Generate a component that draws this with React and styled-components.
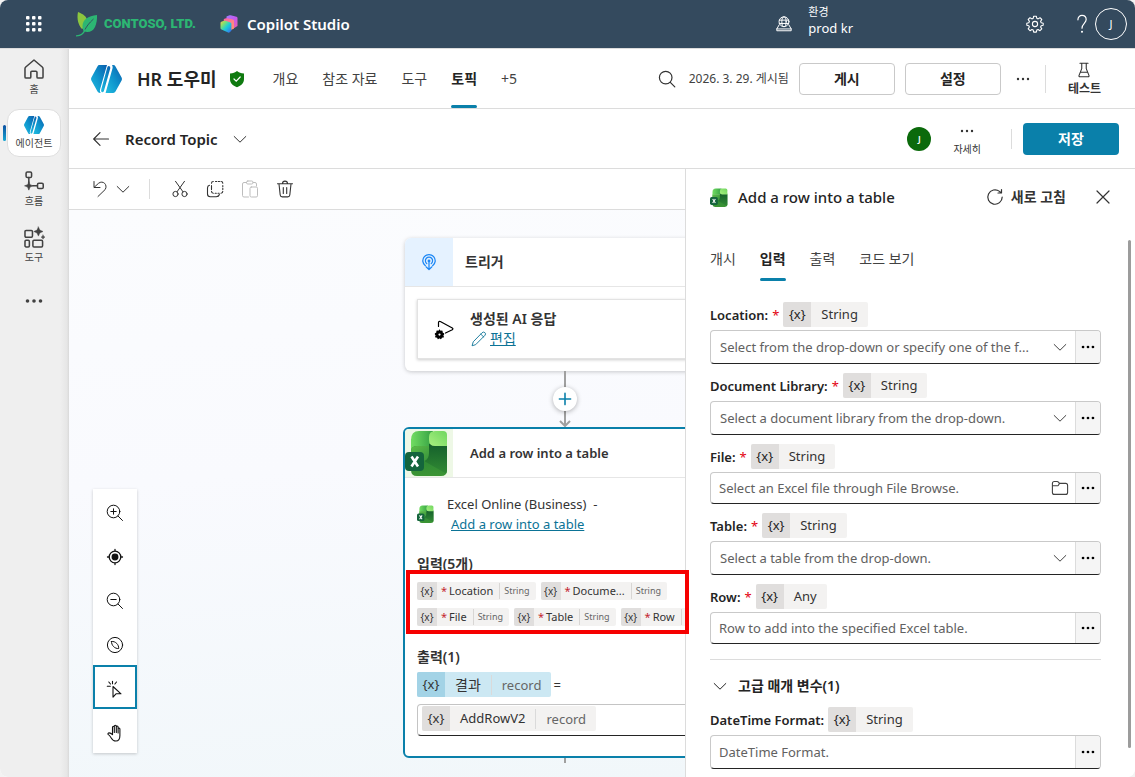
import React from 'react';
import styled, { createGlobalStyle, css } from 'styled-components';

const blue = '#0a80aa';
const ink = '#242424';
const line = '#dcdcdc';

const Global = createGlobalStyle`
  * { box-sizing: border-box; }
  body { margin: 0; background: #f3f3f3; color: ${ink}; }
  body, button, input, select {
    font-family: "Noto Sans", "Noto Sans CJK KR", sans-serif;
    font-size: 13px;
    line-height: 20px;
  }
  button { border: 0; padding: 0; background: none; color: inherit; cursor: pointer; }
  a { color: #0b7396; }
  svg { display: block; flex: none; }
  h1, h2, h3 { margin: 0; font-weight: 600; }
`;

/* ---------- icons ---------- */

function Icon({ size = 20, width = 1, children, ...rest }) {
  return (
    <svg width={size} height={size} viewBox="0 0 20 20" fill="none" stroke="currentColor"
      strokeWidth={width} strokeLinecap="round" strokeLinejoin="round" aria-hidden="true" {...rest}>
      {children}
    </svg>
  );
}

const Chevron = ({ size = 20 }) => <Icon size={size}><path d="M4.2 7.5 10 13.2l5.800-5.700" /></Icon>;
const Dots = ({ size = 20, r = 1.2, gap = 5 }) => (
  <Icon size={size} fill="currentColor" stroke="none">
    <circle cx={10 - gap} cy="10" r={r} /><circle cx="10" cy="10" r={r} /><circle cx={10 + gap} cy="10" r={r} />
  </Icon>
);
const Waffle = () => (
  <svg width="18" height="18" viewBox="0 0 18 18" fill="#fff" aria-hidden="true">
    {[1, 7, 13].map((y) => [1, 7, 13].map((x) => <rect key={`${x}-${y}`} x={x} y={y} width="3.500" height="3.500" rx="1" />))}
  </svg>
);
const Leaf = () => (
  <svg width="22" height="25" viewBox="0 0 22 25" aria-hidden="true">
    <path d="M2 0c5 2 9.500 4.500 9 9.500C10.700 13 8.500 15.500 6 17 2.500 13 .5 7 2 0z" fill="#8cc63f" />
    <path d="M21 3C12 4 6.500 7.500 6.500 14c0 2 .4 3.800 1.200 5.200C12 21 17 19.500 19 15c1.500-3.500 2.300-8 2-12z" fill="#2cb673" />
    <path d="M17.500 7C13 11 10 15 8.300 19" stroke="#344a5e" strokeWidth=".9" fill="none" />
    <path d="M.5 23.800c4 0 7-2 8.500-6" stroke="#2cb673" strokeWidth="1.300" fill="none" strokeLinecap="round" />
  </svg>
);
const CopilotLogo = () => (
  <svg width="18" height="18" viewBox="0 0 18 18" aria-hidden="true">
    <defs>
      <linearGradient id="cpBack" x1="0" y1="0" x2="1" y2="1"><stop offset="0" stopColor="#a27bff" /><stop offset=".5" stopColor="#c459f0" /><stop offset="1" stopColor="#f0609e" /></linearGradient>
      <linearGradient id="cpMid" x1="0" y1="0" x2="1" y2="1"><stop offset="0" stopColor="#ff5fa8" /><stop offset="1" stopColor="#ff9b6b" /></linearGradient>
      <linearGradient id="cpFront" x1="0" y1="0" x2="1" y2="1"><stop offset="0" stopColor="#ffc34d" /><stop offset=".25" stopColor="#8be06a" /><stop offset=".55" stopColor="#1ccfd6" /><stop offset="1" stopColor="#3b63f0" /></linearGradient>
    </defs>
    <path d="M6.500 1.600 9.500.3h1.200L16.500 1.700q1 .3 1 1.300v8l-4 2.500L6.500 10z" fill="url(#cpBack)" />
    <path d="M3.800 4 6 3.200h1l6 1.300q1 .3 1 1.300v7.700l-3 1.500-7.200-4z" fill="url(#cpMid)" />
    <path d="M1.300 6.800 4 5.800q.8-.3 1.600 0l4.800 1.600q1 .4 1 1.400v7l-2 1.700q-.6.300-1.300 0L1.500 14.500Q.5 14 .5 13V8q0-.9.8-1.200z" fill="url(#cpFront)" />
  </svg>
);
const EnvIcon = () => (
  <Icon size={18} width={1.1}>
    <circle cx="10" cy="7.500" r="5.500" /><ellipse cx="10" cy="7.500" rx="2.400" ry="5.500" />
    <path d="M4.800 5.700h10.400M4.800 9.400h10.400M4.600 11 2 15.500h16L15.400 11M2 15.500v2h16v-2" />
  </Icon>
);
const Gear = () => (
  <Icon width={1.1}>
    <circle cx="10" cy="10" r="2.600" />
    <path d="M8.700 2.200h2.600l.5 2.100 1.300.6 1.900-1.200 1.800 1.800-1.200 1.900.6 1.300 2 .5v2l-2 .5-.6 1.300 1.200 1.900-1.800 1.800-1.900-1.200-1.300.6-.5 2H8.700l-.5-2-1.300-.6L5 16.700l-1.800-1.800L4.400 13l-.6-1.300-2-.5v-2l2-.5.6-1.300-1.200-1.900L5 3.700l1.900 1.200 1.300-.6z" />
  </Icon>
);
const Help = () => <Icon size={22} width={1.1}><path d="M6.300 6.200C6.300 3.800 7.900 2.200 10 2.200s3.800 1.500 3.800 3.800c0 3.200-3.800 3.800-3.800 7.800" /><circle cx="10" cy="17" r=".4" fill="currentColor" /></Icon>;

const AgentLogo = ({ size, id }) => (
  <svg width={size} height={Math.round(size * 0.9)} viewBox="0 0 30 27" aria-hidden="true">
    <defs><linearGradient id={id} x1="0" y1="1" x2="1" y2="0"><stop offset="0" stopColor="#22bde0" /><stop offset=".5" stopColor="#0e93cc" /><stop offset="1" stopColor="#0b5fae" /></linearGradient></defs>
    <path d="M8 0h7.500L8.800 23.500q-.6 2 .6 3.500H8.600Q7 27 6.300 25.700L.4 15q-.7-1.500 0-3L6.200 1.300Q6.900 0 8 0z" fill={`url(#${id})`} />
    <path d="M17.300.8q1.800.4 1.300 2.500L12.500 25q-.8 1.800-2.200 1.200-.9-.8-.4-2.500L15.800 2.200Q16.300.8 17.300.8z" fill={`url(#${id})`} />
    <path d="M20.300 0h1.200q1.500 0 2.200 1.300L29.600 12q.7 1.500 0 3l-5.900 10.700Q23 27 21.500 27h-7.400L20.700 3.500q.6-2-.4-3.500z" fill={`url(#${id})`} />
  </svg>
);
const Shield = () => (
  <svg width="16" height="18" viewBox="0 0 16 18" aria-hidden="true">
    <path d="M8 1c1.800 1.500 4 2.200 7 2.400V9c0 4-2.600 6.500-7 8.200C3.600 15.500 1 13 1 9V3.400C4 3.200 6.200 2.500 8 1z" fill="#0f7a10" />
    <path d="m5 9 2.200 2.100L11.200 7" stroke="#fff" strokeWidth="1.200" fill="none" strokeLinecap="round" />
  </svg>
);
const Search = () => <Icon width={1.2}><circle cx="8.700" cy="8.600" r="6.300" /><path d="m13.300 13.300 4.500 4.500" /></Icon>;
const Flask = () => <Icon size={18} width={1.2}><path d="M5.500 2.500h9M7.500 2.500v6L4.500 16q-.5 1.500 1 1.500h9q1.500 0 1-1.500l-3-7.500v-6M6 12.500h8" /></Icon>;
const Back = () => <Icon width={1.2}><path d="M17.500 10H3M9 3.700 2.700 10 9 16.300" /></Icon>;
const Home = () => <Icon size={22} width={1.4}><path d="M10 1.800 2.500 8.200q-.7.700-.7 1.600v7.400q0 1 1 1h3.400q.9 0 .9-1V13q0-1 1-1h3.600q1 0 1 1v4.200q0 1 1 1h3.500q1 0 1-1V9.800q0-.9-.7-1.600z" /></Icon>;
const Flow = () => (
  <Icon size={22} width={1.4}>
    <rect x="2.800" y="1.800" width="5" height="5" rx="1.200" /><rect x="13.200" y="12" width="5.200" height="4.800" rx="1.200" />
    <path d="M5.300 6.800v5M9 14.400h4" />
    <path d="M5.300 10.500 6.400 13.300l2.800 1.100-2.800 1.100-1.100 2.800-1.100-2.800-2.800-1.100 2.800-1.100z" fill="currentColor" strokeWidth=".5" />
  </Icon>
);
const Tools = () => (
  <Icon size={22} width={1.4}>
    <rect x="1.800" y="4" width="6.800" height="6.200" rx="1" /><rect x="1.800" y="13" width="4" height="6" rx="1" /><rect x="9" y="13" width="8.800" height="6" rx="1" />
    <path d="m14 .8 1.300 2.900 2.900 1.300-2.900 1.300L14 9.200l-1.300-2.900L9.800 5l2.900-1.300zM18.200 8.200l.6 1.400 1.200.5-1.200.6-.6 1.300-.6-1.300-1.200-.6 1.200-.5z" fill="currentColor" strokeWidth=".4" />
  </Icon>
);
const Undo = () => <Icon><path d="M4 2.500v6h6M4.200 8.300 8.500 4.300c4.500-3.500 9.500 1.500 6.700 6.200L8 17.500" /></Icon>;
const Cut = () => <Icon><circle cx="5.500" cy="15" r="2.600" /><circle cx="14.500" cy="15" r="2.600" /><path d="M5.500 2.300 13 12.800M14.500 2.300 7 12.800" /></Icon>;
const Copy = () => (
  <Icon width={1.1}>
    <path d="M4.500 6.300Q2.500 6.800 2.500 9v6q0 2.700 2.700 2.700h6q2.600 0 3.200-2.200" />
    <path d="M8.300 2.500Q6.500 2.500 6.500 4.300M10.500 2.500h1.200M13.300 2.500h1.200M16 2.500q1.800 0 1.800 1.800M17.800 6.500v1.200M17.800 9.300v1.200M17.800 12.300q0 1.900-1.800 1.900M14.200 14.200h-1.200M11.300 14.200h-1.200M8.300 14.200q-1.800 0-1.800-1.900M6.500 10.500V6.500" />
  </Icon>
);
const Paste = () => <Icon><path d="M6.500 3.500H4q-1.500 0-1.500 1.500v11.500Q2.500 18 4 18h4.500M13 3.500h2Q16.500 3.500 16.500 5v2" /><rect x="6.500" y="2" width="6.500" height="3" rx="1.300" /><rect x="10" y="8" width="7.500" height="10" rx="1.300" /></Icon>;
const Trash = () => <Icon width={1.1}><path d="M2.500 4.800h15M7.500 4.500q0-2.400 2.500-2.400t2.500 2.400M4 5l1.200 11q.2 1.900 2 1.900h5.600q1.800 0 2-1.900L16 5M8.300 8.500v6M11.700 8.500v6" /></Icon>;

const ZoomIn = () => <Icon><circle cx="8.500" cy="8.500" r="6.300" /><path d="m13.100 13.100 4.400 4.400M8.500 5.800v5.400M5.800 8.500h5.400" /></Icon>;
const ZoomOut = () => <Icon><circle cx="8.500" cy="8.500" r="6.300" /><path d="m13.100 13.100 4.400 4.400M5.800 8.500h5.400" /></Icon>;
const Target = () => <Icon width={1.3}><circle cx="10" cy="10" r="5.800" /><circle cx="10" cy="10" r="2.800" fill="currentColor" /><path d="M10 2.500v1M10 16.500v1M2.500 10h1M16.500 10h1" /></Icon>;
const Compass = () => <Icon><circle cx="10" cy="10" r="7.600" /><path d="M6.500 6.500c1.800-.4 4 .6 5.300 2 1.300 1.300 2 3.200 1.900 5-1.800.3-3.900-.6-5.200-2C7.200 10.200 6.400 8.300 6.500 6.500z" /></Icon>;
const Pointer = () => <Icon width={1.1}><path d="M8 7.500v10.600l3-3.300h5zM7.500 2.200v2.500M3.800 3l1.700 2M2.300 7.300h3M11.500 3 9.900 5" /></Icon>;
const Hand = () => <Icon width={1.1}><path d="M7.500 10V4.200q0-1 .9-1t.9 1V9.500 3.200q0-1 1-1t1 1V9.500 4q0-1 .9-1t.9 1v6V6q0-1 .9-1t.9 1v6.500c0 3.500-1.500 5.500-4 5.500-2.400 0-3.500-1-4.500-2.800-1-1.600-2-3-3.300-3.800-.5-.6 0-1.500 1-1.500 1.500 0 2.500.8 3.400 1.800z" /></Icon>;
const TriggerIcon = () => (
  <Icon size={18} width={1.4}>
    <path d="M6 14.200a6.900 6.900 0 1 1 8 0" /><path d="M7.500 11.700a4 4 0 1 1 5 0" /><path d="M10 9v9M7 15.500l3 3 3-3" /><circle cx="10" cy="8.800" r=".9" fill="currentColor" />
  </Icon>
);
const PlayGear = () => (
  <svg width="22" height="22" viewBox="0 0 22 22" fill="none" stroke="#000" strokeWidth="1.200" strokeLinecap="round" strokeLinejoin="round" aria-hidden="true">
    <path d="M5.500 8.500V4.500q.2-1.700 1.800-1l12 6.500q1.200.8 0 1.700L12.500 15" />
    <path d="m6.500 12 .7 1.700 1.800-.5.200 1.900 1.500.8-1 1.400.6 1.600-1.800.2-.6 1.500-1.400-1-1.400 1-.6-1.500-1.800-.2.600-1.600-1-1.400 1.500-.8.200-1.900 1.800.5z" fill="#000" /><circle cx="6.500" cy="16.600" r="1.100" fill="#fff" stroke="none" />
  </svg>
);
const Pencil = () => <Icon size={18}><path d="M13.700 2.800q1.300-1.200 2.800.1t.3 2.800L6.300 16.300 2.300 17.500l1.200-4zM12 4.600l3.300 3.300" /></Icon>;
const Refresh = () => <Icon width={1.2}><path d="M17.200 10A7.200 7.200 0 1 1 14.500 4.400l1.500 1.300M16.500 2.500v3.500h-3.500" /></Icon>;
const Close = () => <Icon width={1.2}><path d="m4 4 12 12M16 4 4 16" /></Icon>;
const Folder = () => <Icon width={1.1}><path d="M2.400 5.500q0-2 2-2h2.800q.7 0 1.200.6l1.100 1.300h6.100q2 0 2 2v7q0 2-2 2H4.400q-2 0-2-2zM2.400 7.800h4.800q.7 0 1.200-.5l1.100-1.900" /></Icon>;

const Excel = ({ size, id }) => (
  <svg width={size} height={size} viewBox="0 0 46 46" aria-hidden="true">
    <defs>
      <linearGradient id={`${id}a`} x1="0" y1="0" x2="0" y2="1"><stop offset="0" stopColor="#3f9f3d" /><stop offset=".5" stopColor="#2f8a35" /><stop offset="1" stopColor="#3c9534" /></linearGradient>
      <linearGradient id={`${id}b`} x1="0" y1="0" x2="1" y2="0"><stop offset="0" stopColor="#72dd62" /><stop offset="1" stopColor="#35a044" /></linearGradient>
      <linearGradient id={`${id}c`} x1="0" y1="0" x2="1" y2="1"><stop offset="0" stopColor="#5fbf4a" /><stop offset="1" stopColor="#36923a" /></linearGradient>
      <linearGradient id={`${id}d`} x1="0" y1="1" x2="1" y2="0"><stop offset="0" stopColor="#a9f080" /><stop offset="1" stopColor="#6fd65f" /></linearGradient>
      <linearGradient id={`${id}e`} x1="0" y1="0" x2="0" y2="1"><stop offset="0" stopColor="#15602c" /><stop offset="1" stopColor="#318a33" /></linearGradient>
    </defs>
    <path d="M6 16h36v24q0 6-6 6H12q-6 0-6-6z" fill={`url(#${id}a)`} />
    <path d="M6 18v-8Q6 1 14 1h14v15H12q-6 0-6 5z" fill={`url(#${id}b)`} />
    <path d="M6 22q0-6 6-6h12v9q0 7-7 7H6z" fill={`url(#${id}c)`} />
    <path d="M24 14h18v26q0 2-1 3.500L19 31q5-1.500 5-8z" fill={`url(#${id}e)`} />
    <path d="M30 1h8q4 0 4 4v11H30q-6 0-6-6V7q0-6 6-6z" fill={`url(#${id}d)`} />
    <rect x="0" y="22" width="19" height="19" rx="4" fill="#14653c" />
    <path d="m6.500 26.500 6.500 10M13 26.500l-6.500 10" stroke="#fff" strokeWidth="2.600" />
  </svg>
);

/* ---------- shell ---------- */

const Shell = styled.div`
  display: flex; flex-direction: column; height: 100vh; min-height: 600px;
  border-radius: 8px; overflow: hidden; background: #fff;
`;
const TopBar = styled.header`
  display: flex; align-items: center; flex: none; height: 49px; padding: 0 8px 0 25px;
  color: #fff; background: #344a5e; border-bottom: 1px solid ${line};
`;
const Brand = styled.span`
  width: 90px; margin-left: 6px; white-space: nowrap;
  font: 900 13px/20px Roboto, sans-serif;
  color: #2cb673;
`;
const LogoSlot = styled.span`margin-left: ${(p) => p.$gap}px;`;
const Product = styled.span`margin-left: 9px; font-size: 15px; font-weight: 600;`;
const Env = styled.div`display: flex; align-items: center; gap: 15px; margin-left: auto;`;
const EnvText = styled.div`
  display: flex; flex-direction: column; font-size: 13px; line-height: 16px; margin-bottom: 8px;
  small { font-size: 11px; }
`;
const TopActions = styled.div`display: flex; align-items: center; margin-left: 172px;`;
const TopButton = styled.button`display: flex; margin-right: ${(p) => p.$after}px;`;
const Me = styled.button`
  width: 32px; height: 32px; border: 1px solid #fff; border-radius: 50%; font-size: 11px;
`;

const Columns = styled.div`display: flex; flex: 1; min-height: 0;`;
const SideNav = styled.nav`
  display: flex; flex-direction: column; flex: none; width: 69px;
  background: linear-gradient(90deg, #efefef 60px, #e6e6e6 67px, #d8d8d8 69px);
`;
const NavItem = styled.button`
  position: relative; display: flex; flex-direction: column; align-items: center; justify-content: center;
  width: 54px; height: 48px; margin: 4px 7px; border-radius: 12px;
  font-size: 10px; line-height: 14px; color: #424242;
  gap: 2px;
  ${(p) => p.$active && css`
    background: #fff; border: 1px solid #dedede;
    &::before { content: ""; position: absolute; left: -5px; top: 15px; width: 3px; height: 16px; border-radius: 2px; background: linear-gradient(#0b4fa0, #16a6d2); }
  `}
`;
const Main = styled.main`display: flex; flex-direction: column; flex: 1; min-width: 0;`;
const Bar = styled.div`
  display: flex; align-items: center; flex: none; height: 60px; padding: 0 ${(p) => p.$right || 16}px 0 22px;
  background: #fff; border-bottom: 1px solid ${line};
`;
const AgentName = styled.h1`margin: 0 12px 0 15px; font-size: 18px; line-height: 26px;`;
const Tabs = styled.div`display: flex; align-self: stretch; gap: 24px; margin-left: ${(p) => p.$left || 0}px;`;
const Tab = styled.button`
  position: relative; font-size: 14px; color: #424242;
  ${(p) => p.$on && css`
    font-weight: 700; color: ${ink};
    &::after { content: ""; position: absolute; left: 0; right: 0; bottom: 0; height: 3px; border-radius: 2px; background: ${blue}; }
  `}
`;
const Right = styled.div`display: flex; align-items: center; margin-left: auto;`;
const Published = styled.span`margin: 0 10px 0 12px; font-size: 12px; color: #424242;`;
const Button = styled.button`
  width: 96px; height: 32px; border-radius: 4px; font-size: 14px; font-weight: 700;
  ${(p) => p.$primary ? css`background: ${blue}; color: #fff;` : css`border: 1px solid #c9c9c9; background: #fff; margin-right: 10px;`}
`;
const Rule = styled.span`width: 1px; height: ${(p) => p.$h}px; background: ${line}; margin: 0 ${(p) => p.$right}px 0 ${(p) => p.$left}px;`;
const Stacked = styled.button`
  display: flex; flex-direction: column; align-items: center; font-size: ${(p) => p.$size}px; line-height: 16px;
  font-weight: ${(p) => (p.$bold ? 600 : 400)}; color: #333; gap: ${(p) => p.$gap || 0}px;
`;
const IconButton = styled.button`
  display: flex; align-items: center; justify-content: center; width: ${(p) => p.$w || 20}px; height: 32px;
  color: ${(p) => (p.disabled ? '#bdbdbd' : '#333')};
`;
const TopicName = styled.h2`margin: 0 12px 0 14px; font-size: 15px; line-height: 20px;`;
const Avatar = styled.span`
  display: flex; align-items: center; justify-content: center; width: 24px; height: 24px;
  border-radius: 50%; background: #0b6a0b; color: #fff; font-size: 9px; font-weight: 600; margin-right: 22px;
`;

/* ---------- workspace ---------- */

const Workspace = styled.div`position: relative; display: flex; flex: 1; min-height: 0;`;
const Editor = styled.section`display: flex; flex-direction: column; flex: 1; min-width: 0;`;
const Toolbar = styled.div`
  display: flex; align-items: center; flex: none; height: 41px; padding-left: 21px;
  background: #fff; border-bottom: 1px solid ${line};
`;
const ToolGroup = styled.div`display: flex; gap: 15px;`;
const Canvas = styled.div`
  position: relative; flex: 1; overflow: hidden;
  background: linear-gradient(175deg, #fbfcfe 0%, #f9fafe 45%, #f1f7fa 100%);
`;
const ControlStrip = styled.div`
  position: absolute; left: 24px; bottom: 24px; display: flex; flex-direction: column;
  background: #fff; box-shadow: 0 1px 3px rgba(0, 0, 0, .2);
`;
const Control = styled.button`
  display: flex; align-items: center; justify-content: center; width: 44px; height: 44px; padding-top: 4px; color: #111;
  border: 2px solid ${(p) => (p.$on ? blue : 'transparent')};
`;
const Graph = styled.div`
  position: absolute; left: 334px; top: 28px; width: 324px;
  display: flex; flex-direction: column; align-items: center;
`;
const Node = styled.article`
  width: ${(p) => (p.$selected ? 324 : 320)}px; background: #fff; border-radius: 6px; overflow: hidden; flex: none;
  box-shadow: 0 1px 4px rgba(0, 0, 0, .2);
  ${(p) => p.$selected && css`border: 2px solid ${blue}; box-shadow: none;`}
`;
const NodeHead = styled.div`display: flex; align-items: center; height: 49px; border-bottom: 1px solid #e6e6e6;`;
const NodeIcon = styled.div`
  display: flex; align-items: center; justify-content: ${(p) => (p.$start ? 'flex-start' : 'center')}; width: 48px; height: 48px;
  background: ${(p) => p.$bg}; color: #1c87f5;
`;
const NodeTitle = styled.h3`margin-left: ${(p) => p.$gap}px; font-size: ${(p) => p.$size}px; line-height: 20px; color: #333;`;
const TriggerCard = styled.div`
  display: flex; align-items: center; gap: 15px; height: 60px; margin: 12px; padding: 0 15px;
  border: 1px solid #e3e3e3; box-shadow: 0 1px 3px rgba(0, 0, 0, .2);
`;
const CardText = styled.div`font-size: 14px; font-weight: 600; color: #333;`;
const EditLink = styled.a`display: flex; align-items: center; gap: 2px; font-weight: 400; text-decoration: none; span { text-decoration: underline; }`;
const Connector = styled.div`
  position: relative; display: flex; align-items: center; justify-content: center; flex: none; width: 24px; height: 56px;
`;
const ConnectorLine = styled.svg`position: absolute; left: 0; top: 0;`;
const AddButton = styled.button`
  position: relative; display: flex; align-items: center; justify-content: center; width: 24px; height: 24px;
  border-radius: 50%; background: #fff; color: ${blue}; box-shadow: 0 1px 5px rgba(0, 0, 0, .3);
`;
const Tail = styled.div`width: 2px; height: 5px; background: #a0a0a0;`;

const NodeBody = styled.div`padding: 16px 12px 20px; color: #333;`;
const Connection = styled.div`display: flex; align-items: center; gap: 12px;`;
const ConnectionText = styled.div`
  white-space: pre;
  a { display: block; margin-left: 4px; }
`;
const SubHead = styled.h3`margin-top: ${(p) => p.$top}px; font-size: 14px; line-height: 20px;`;
const ChipFlow = styled.div`display: flex; flex-wrap: wrap; gap: 8px 5px; margin: 8px 0 0;`;
const MiniChip = styled.span`
  display: flex; align-items: center; height: 18px; padding-right: 6px; border-radius: 2px; overflow: hidden;
  background: #f3f2f1; font-size: 11px; line-height: 18px;
  b { width: 20px; margin-right: 4px; background: #e0dedd; font-weight: 400; font-size: 10px; text-align: center; }
  i { margin-right: 2px; color: #c4262e; font-style: normal; }
  small { margin-left: 6px; padding-left: 4px; border-left: 1px solid #d8d6d4; font-size: 9px; line-height: 16px; color: #666; }
`;
const ChipBox = styled.span`
  display: inline-flex; flex: none; height: 25px; border-radius: 2px; overflow: hidden; line-height: 25px;
  background: ${(p) => (p.$blue ? '#cce8f3' : '#f3f2f1')};
  b { width: 28px; font-weight: 400; text-align: center; background: ${(p) => (p.$blue ? '#a3d3e6' : '#e0dedd')}; }
  span { padding: 0 10px; font-size: ${(p) => p.$size || 13}px; color: #333; }
  em { align-self: center; padding: 0 10px; border-left: 1px solid #dadada; font-style: normal; line-height: 20px; color: #666; }
`;
const Assign = styled.div`display: flex; align-items: center; gap: 2px; margin: 5px 0 7px;`;
const ValueBox = styled.div`
  display: flex; height: 32px; padding: 1px 4px; border: 1px solid #c4c4c4; border-bottom-color: ${ink}; border-radius: 4px;
`;
const Highlight = styled.div`
  position: absolute; left: 337px; top: 401px; width: 283px; height: 64px; z-index: 3;
  border: 4px solid #f60000; pointer-events: none;
`;

/* ---------- properties panel ---------- */

const Panel = styled.aside`
  position: relative; flex: none; width: 450px; padding: 16px 34px 0 24px; border-left: 1px solid ${line}; background: #fff;
  overflow: hidden;
`;
const PanelHead = styled.div`display: flex; align-items: center; height: 24px; margin-right: -12px;`;
const PanelTitle = styled.h2`margin-left: 9px; font-size: 15px; line-height: 20px; font-weight: 500;`;
const RefreshButton = styled.button`display: flex; align-items: center; gap: 6px; margin: 0 27px 0 auto; font-size: 14px; font-weight: 600; color: #333;`;
const PanelTabs = styled(Tabs)`height: 44px; margin: 28px 0 21px;`;
const Fields = styled.div`display: flex; flex-direction: column; gap: 9px;`;
const LabelRow = styled.div`
  display: flex; align-items: center; height: 25px; margin-bottom: 3px;
  label { font-weight: 600; }
  i { margin-left: 4px; color: #e3000f; font-style: normal; }
`;
const ChipSlot = styled.span`display: flex; margin-left: 4px;`;
const Box = styled.div`
  display: flex; align-items: center; height: ${(p) => p.$h}px; border: 1px solid #c9c9c9; border-bottom-color: ${ink};
  border-radius: 4px; overflow: hidden;
`;
const control = css`
  flex: 1; min-width: 0; height: 100%; border: 0; padding: 0 0 0 9px; outline: 0; background: none; color: #616161;
  appearance: none; text-overflow: ellipsis;
  &::placeholder { color: #616161; opacity: 1; }
`;
const Select = styled.select`${control}`;
const Input = styled.input`${control} padding-left: 8px;`;
const Affix = styled.span`display: flex; margin: 0 5px; color: #424242;`;
const More = styled.button`
  display: flex; align-items: center; justify-content: center; width: 25px; height: 100%;
  background: #f5f5f5; border-left: 1px solid ${line}; color: #000;
`;
const Divider = styled.hr`margin: 15px 0 14px; border: 0; border-top: 1px solid ${line};`;
const SectionToggle = styled.button`
  display: flex; align-items: center; gap: 8px; height: 24px; margin-bottom: 9px; font-size: 14px; font-weight: 600;
`;
const ScrollThumb = styled.div`
  position: absolute; right: 4px; top: 71px; bottom: 29px; width: 3px; border-radius: 2px; background: #9c9c9c;
`;

function Chip({ name, type, ...rest }) {
  return <ChipBox {...rest}><b>{'{x}'}</b><span>{name}</span>{type && <em>{type}</em>}</ChipBox>;
}

function Field({ id, label, type, required, kind, hint }) {
  return (
    <div>
      <LabelRow>
        <label htmlFor={id}>{label}:</label>{required && <i>*</i>}
        <ChipSlot><Chip name={type} /></ChipSlot>
      </LabelRow>
      <Box $h={kind === 'select' || !required ? 34 : 32}>
        {kind === 'select'
          ? <Select id={id} defaultValue=""><option value="">{hint}</option></Select>
          : <Input id={id} placeholder={hint} />}
        {kind === 'select' && <Affix><Chevron /></Affix>}
        {kind === 'file' && <Affix><Folder /></Affix>}
        <More type="button" aria-label={`${label} options`}><Dots size={18} r={1.5} gap={5.500} /></More>
      </Box>
    </div>
  );
}

const inputs = [
  ['Location', 'String'], ['Docume...', 'String'], ['File', 'String'], ['Table', 'String'], ['Row', 'Any'],
];
const fields = [
  { id: 'location', label: 'Location', type: 'String', kind: 'select', hint: 'Select from the drop-down or specify one of the f...' },
  { id: 'library', label: 'Document Library', type: 'String', kind: 'select', hint: 'Select a document library from the drop-down.' },
  { id: 'file', label: 'File', type: 'String', kind: 'file', hint: 'Select an Excel file through File Browse.' },
  { id: 'table', label: 'Table', type: 'String', kind: 'select', hint: 'Select a table from the drop-down.' },
  { id: 'row', label: 'Row', type: 'Any', kind: 'text', hint: 'Row to add into the specified Excel table.' },
];

export default function App() {
  return (
    <Shell>
      <Global />
      <TopBar>
        <TopButton aria-label="Apps"><Waffle /></TopButton>
        <LogoSlot $gap={33}><Leaf /></LogoSlot>
        <Brand>CONTOSO, LTD.</Brand>
        <LogoSlot $gap={26}><CopilotLogo /></LogoSlot>
        <Product>Copilot Studio</Product>
        <Env><EnvIcon /><EnvText><small>환경</small>prod kr</EnvText></Env>
        <TopActions>
          <TopButton $after={26} aria-label="Settings"><Gear /></TopButton>
          <TopButton $after={2} aria-label="Help"><Help /></TopButton>
          <Me>J</Me>
        </TopActions>
      </TopBar>
      <Columns>
        <SideNav>
          <NavItem><Home />홈</NavItem>
          <NavItem $active><AgentLogo size={20} id="agentSmall" />에이전트</NavItem>
          <NavItem><Flow />흐름</NavItem>
          <NavItem><Tools />도구</NavItem>
          <NavItem aria-label="More"><Dots r={1.8} gap={6.500} /></NavItem>
        </SideNav>
        <Main>
          <Bar $right={34}>
            <AgentLogo size={31} id="agentLarge" />
            <AgentName>HR 도우미</AgentName>
            <Shield />
            <Tabs $left={28}>
              <Tab>개요</Tab><Tab>참조 자료</Tab><Tab>도구</Tab><Tab $on>토픽</Tab><Tab>+5</Tab>
            </Tabs>
            <Right>
              <IconButton aria-label="Search"><Search /></IconButton>
              <Published>2026. 3. 29. 게시됨</Published>
              <Button>게시</Button>
              <Button>설정</Button>
              <IconButton $w={24} aria-label="More"><Dots /></IconButton>
              <Rule $h={28} $left={10} $right={22} />
              <Stacked $size={12} $bold $gap={2}><Flask />테스트</Stacked>
            </Right>
          </Bar>
          <Bar>
            <IconButton aria-label="Back"><Back /></IconButton>
            <TopicName>Record Topic</TopicName>
            <IconButton aria-label="Topic menu"><Chevron /></IconButton>
            <Right>
              <Avatar>J</Avatar>
              <Stacked $size={10}><Dots />자세히</Stacked>
              <Rule $h={20} $left={30} $right={11} />
              <Button $primary>저장</Button>
            </Right>
          </Bar>
          <Workspace>
            <Editor>
              <Toolbar>
                <IconButton aria-label="Undo"><Undo /></IconButton>
                <IconButton $w={26} aria-label="Undo history"><Chevron /></IconButton>
                <Rule $h={20} $left={13} $right={20} />
                <ToolGroup>
                  <IconButton aria-label="Cut"><Cut /></IconButton>
                  <IconButton aria-label="Copy"><Copy /></IconButton>
                  <IconButton aria-label="Paste" disabled><Paste /></IconButton>
                  <IconButton aria-label="Delete"><Trash /></IconButton>
                </ToolGroup>
              </Toolbar>
              <Canvas>
                <Graph>
                  <Node>
                    <NodeHead>
                      <NodeIcon $bg="#e5f2ff"><TriggerIcon /></NodeIcon>
                      <NodeTitle $gap={12} $size={14}>트리거</NodeTitle>
                    </NodeHead>
                    <TriggerCard>
                      <PlayGear />
                      <CardText>
                        생성된 AI 응답
                        <EditLink href="#edit"><Pencil /><span>편집</span></EditLink>
                      </CardText>
                    </TriggerCard>
                  </Node>
                  <Connector>
                    <ConnectorLine width="24" height="56" fill="none" stroke="#a0a0a0" strokeWidth="2">
                      <path d="M12 0v55M7 50l5 5 5-5" />
                    </ConnectorLine>
                    <AddButton aria-label="Add node"><Icon size={16} width={2}><path d="M10 3v14M3 10h14" /></Icon></AddButton>
                  </Connector>
                  <Node $selected>
                    <NodeHead>
                      <NodeIcon $bg="#eef8e6" $start><Excel size={46} id="xl" /></NodeIcon>
                      <NodeTitle $gap={17} $size={13}>Add a row into a table</NodeTitle>
                    </NodeHead>
                    <NodeBody>
                      <Connection>
                        <Excel size={18} id="xs" />
                        <ConnectionText>{'Excel Online (Business)  -'}<a href="#action">Add a row into a table</a></ConnectionText>
                      </Connection>
                      <SubHead $top={20}>입력(5개)</SubHead>
                      <ChipFlow>
                        {inputs.map(([name, type]) => (
                          <MiniChip key={name}><b>{'{x}'}</b><i>*</i>{name}<small>{type}</small></MiniChip>
                        ))}
                      </ChipFlow>
                      <SubHead $top={21}>출력(1)</SubHead>
                      <Assign><Chip name="결과" type="record" $blue $size={14} /> =</Assign>
                      <ValueBox><Chip name="AddRowV2" type="record" /></ValueBox>
                    </NodeBody>
                  </Node>
                  <Tail />
                </Graph>
                <ControlStrip>
                  <Control aria-label="Zoom in"><ZoomIn /></Control>
                  <Control aria-label="Recenter"><Target /></Control>
                  <Control aria-label="Zoom out"><ZoomOut /></Control>
                  <Control aria-label="Minimap"><Compass /></Control>
                  <Control $on aria-label="Select"><Pointer /></Control>
                  <Control aria-label="Pan"><Hand /></Control>
                </ControlStrip>
              </Canvas>
            </Editor>
            <Panel>
              <PanelHead>
                <Excel size={19} id="xp" />
                <PanelTitle>Add a row into a table</PanelTitle>
                <RefreshButton><Refresh />새로 고침</RefreshButton>
                <IconButton aria-label="Close"><Close /></IconButton>
              </PanelHead>
              <PanelTabs>
                <Tab>개시</Tab><Tab $on>입력</Tab><Tab>출력</Tab><Tab>코드 보기</Tab>
              </PanelTabs>
              <Fields>{fields.map((f) => <Field key={f.id} required {...f} />)}</Fields>
              <Divider />
              <SectionToggle><Chevron />고급 매개 변수(1)</SectionToggle>
              <Field id="datetime" label="DateTime Format" type="String" kind="text" hint="DateTime Format." />
              <ScrollThumb />
            </Panel>
            <Highlight />
          </Workspace>
        </Main>
      </Columns>
    </Shell>
  );
}
